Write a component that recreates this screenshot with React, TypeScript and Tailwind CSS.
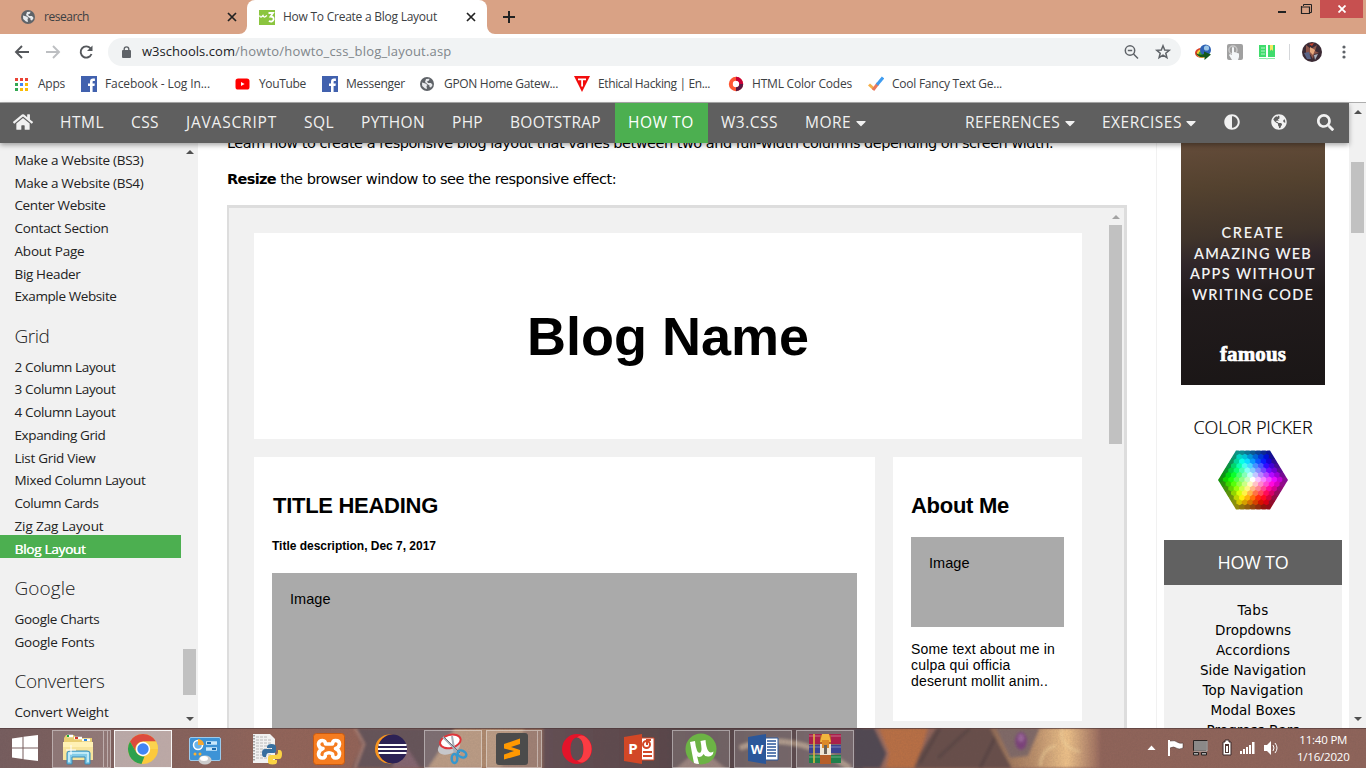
import React, { useLayoutEffect, useRef, useState } from "react";
import { FaHome, FaSearch, FaAdjust, FaGlobeAmericas, FaCaretDown } from "react-icons/fa";

/* Text run whose tracking is adjusted so that it fills a known advance width. */
function Fit({ w, className = "", children }: { w: number; className?: string; children: string }) {
  const ref = useRef<HTMLSpanElement>(null);
  const [tracking, setTracking] = useState(0);
  useLayoutEffect(() => {
    if (ref.current) {
      const natural = ref.current.getBoundingClientRect().width - tracking * children.length;
      setTracking((w - natural) / children.length);
    }
  }, [w, children]);
  return (
    <span ref={ref} className={`inline-block shrink-0 whitespace-pre ${className}`} style={{ letterSpacing: tracking }}>
      {children}
    </span>
  );
}

const GlobeIcon = () => (
  <svg width="14" height="14" viewBox="0 0 14 14">
    <circle cx="7" cy="7" r="7" fill="#5f6368" />
    <path d="M2 5.5 L5.5 6.5 L7.5 8 L6.5 9 L7 12 L5 11.5 L2.2 9 Z M6 2 L9.5 1.8 L9 3.5 L7 4.5 L8 6 L11 6 L12.6 8 L11 10.5 L9.5 10 L9.5 8.5 L7.2 7 L5 5 Z" fill="#e8eaed" />
  </svg>
);
const FbIcon = () => (
  <svg width="16" height="16" viewBox="0 0 16 16">
    <rect width="16" height="16" fill="#4161ae" />
    <path d="M9 16V10H7V7.6H9V5.7C9 3.6 10.1 2.6 12 2.6H13.9V5H12.6C11.8 5 11.6 5.4 11.6 6V7.6H13.8L13.5 10H11.6V16Z" fill="#fff" />
  </svg>
);
const AppsIcon = () => (
  <svg width="14" height="14" viewBox="0 0 14 14">
    {["#ea4335", "#ea4335", "#ea4335", "#34a853", "#4285f4", "#fbbc04", "#34a853", "#fbbc04", "#fbbc04"].map((c, i) => (
      <rect key={i} x={1 + (i % 3) * 5} y={1 + Math.floor(i / 3) * 5} width="3" height="3" fill={c} />
    ))}
  </svg>
);
const YtIcon = () => (
  <svg width="16" height="16" viewBox="0 0 16 16">
    <rect x="0.5" y="2.4" width="14" height="11.2" rx="2.6" fill="#f00" />
    <path d="M6 5.9V10.1L9.6 8Z" fill="#fff" />
  </svg>
);
const EthicalIcon = () => (
  <svg width="16" height="16" viewBox="0 0 16 16">
    <path d="M0 0H16L8 16Z" fill="#f20d0d" />
    <path d="M4 2.5H12V4.3H9V10.5H7.2V4.3H4Z" fill="#fff" />
  </svg>
);
const ColorCodesIcon = () => (
  <svg width="16" height="16" viewBox="0 0 16 16" fill="none" strokeWidth="4">
    <circle cx="8" cy="8" r="5.2" stroke="#ff5733" />
    <path d="M8 2.8A5.2 5.2 0 0 1 13.2 8" stroke="#c70039" />
    <path d="M13.2 8A5.2 5.2 0 0 1 8 13.200" stroke="#581845" />
  </svg>
);
const CheckIcon = () => (
  <svg width="16" height="16" viewBox="0 0 16 16" fill="none" strokeWidth="3">
    <path d="M1 8.500L6 13" stroke="#f5b04a" />
    <path d="M5 14L10 7.5" stroke="#e8785c" />
    <path d="M9 8.8L15 1.5" stroke="#3f9cf0" />
  </svg>
);

const bookmarks = [
  { label: "Apps", w: 27, cell: "w-[67px]", icon: <AppsIcon /> },
  { label: "Facebook - Log In...", w: 105, cell: "w-[154px]", icon: <FbIcon /> },
  { label: "YouTube", w: 47, cell: "w-[87px]", icon: <YtIcon /> },
  { label: "Messenger", w: 59, cell: "w-[98px]", icon: <FbIcon /> },
  { label: "GPON Home Gatew...", w: 114, cell: "w-[154px]", icon: <GlobeIcon /> },
  { label: "Ethical Hacking | En...", w: 112, cell: "w-[154px]", icon: <EthicalIcon /> },
  { label: "HTML Color Codes", w: 100, cell: "w-[140px]", icon: <ColorCodesIcon /> },
  { label: "Cool Fancy Text Ge...", w: 110, cell: "w-[154px]", icon: <CheckIcon /> },
];

function Close({ className }: { className: string }) {
  return (
    <svg className={`shrink-0 ${className}`} width="10" height="10" viewBox="0 0 10 10" stroke="#222" strokeWidth="1.7">
      <path d="M1 1L9 9M9 1L1 9" />
    </svg>
  );
}

function TabStrip() {
  return (
    <div className="flex h-[34px] shrink-0 bg-[#d9a285] font-['Open_Sans',sans-serif] text-[12px] text-[#3c4043]">
      <div className="flex h-full w-[247px] items-center pl-[21px]">
        <GlobeIcon />
        <Fit w={45} className="ml-[9px]">research</Fit>
        <Close className="ml-[138px]" />
      </div>
      <div className="relative flex h-full w-[240px] items-center rounded-t-lg bg-white pl-3">
        <svg className="absolute bottom-0 -left-2" width="8" height="8"><path d="M8 0V8H0A8 8 0 0 0 8 0Z" fill="#fff" /></svg>
        <svg className="absolute -right-2 bottom-0" width="8" height="8"><path d="M0 0V8H8A8 8 0 0 1 0 0Z" fill="#fff" /></svg>
        <svg className="shrink-0" width="16" height="15" viewBox="0 0 16 15" fill="none" stroke="#fff">
          <rect width="16" height="15" fill="#8bc53f" stroke="none" />
          <path d="M.5 5.5Q1.5 8 3 6.5L4 5.5Q5 8 6.5 6.5L8 5.5" strokeWidth="1.3" />
          <path d="M9.5 3H14L11.5 6.5Q15 6.5 14.6 9.5Q13.8 12.5 9.8 11" strokeWidth="1.8" />
        </svg>
        <Fit w={154} className="ml-2">How To Create a Blog Layout</Fit>
        <Close className="ml-[29px]" />
      </div>
      <svg className="mt-[11px] ml-4" width="12" height="12" stroke="#222" strokeWidth="2"><path d="M6 0V12M0 6H12" /></svg>
      <div className="ml-auto flex h-[18px] pr-[3px]">
        <svg width="42" height="18" fill="none" stroke="#222">
          <path d="M0 12H8" strokeWidth="2" />
          <path d="M25.500 6V4.500H33.500V12.500H32" strokeWidth="1" />
          <path d="M23.500 6V13.500H31.500V6.500M23 7H32" strokeWidth="1.200" />
        </svg>
        <div className="flex w-[43px] items-center justify-center bg-[#c75050]">
          <svg width="8" height="8" stroke="#fff" strokeWidth="1.8"><path d="M.5 .5L7.5 7.5M7.5 .5L.5 7.5" /></svg>
        </div>
      </div>
    </div>
  );
}

function Toolbar() {
  return (
    <div className="flex h-[36px] shrink-0 items-center bg-white font-['Open_Sans',sans-serif] text-[13px]">
      <svg className="ml-[14px] shrink-0" width="82" height="16" viewBox="0 0 82 16" fill="none" strokeWidth="1.9">
        <path d="M15 8H2.5M8 2L2 8L8 14" stroke="#55585c" />
        <path d="M32 8H44.500M39 2L45 8L39 14" stroke="#bdbfc2" />
        <path d="M76.500 4.300A5.600 5.600 0 1 0 77.500 10" stroke="#55585c" />
        <path d="M78.500 1.500V7H73Z" fill="#55585c" stroke="none" />
      </svg>
      <div className="ml-3 flex h-7 w-[1073px] items-center rounded-full bg-[#f1f3f4] pl-[14px]">
        <svg width="9" height="12" viewBox="0 0 9 12" fill="none" className="shrink-0">
          <rect y="4" width="9" height="8" rx="1" fill="#5f6368" />
          <path d="M2.200 5V3.200A2.300 2.300 0 0 1 6.800 3.200V5" stroke="#5f6368" strokeWidth="1.400" />
        </svg>
        <Fit w={93} className="ml-[11px] text-[#202124]">w3schools.com</Fit>
        <Fit w={216.500} className="text-[#80868b]">/howto/howto_css_blog_layout.asp</Fit>
        <svg className="ml-[672px] shrink-0" width="48" height="16" viewBox="0 0 48 16" fill="none" stroke="#5f6368" strokeWidth="1.500">
          <circle cx="6" cy="6.500" r="4.700" /><path d="M9.500 10L14 14.500M3.800 6.500H8.200" />
          <path d="M39 1.800L40.700 6L45.200 6.300L41.800 9.200L42.900 13.600L39 11.200L35.100 13.600L36.200 9.200L32.800 6.300L37.300 6Z" />
        </svg>
      </div>
      <svg className="ml-[14px] shrink-0" width="82" height="18" viewBox="0 0 82 18">
        <ellipse cx="6.500" cy="10" rx="6.500" ry="5" fill="#d93a25" /><ellipse cx="7" cy="10.500" rx="5.200" ry="4.200" fill="#f3cf36" /><ellipse cx="7.500" cy="11" rx="4" ry="3" fill="#3ea23c" />
        <circle cx="10.500" cy="7" r="5.500" fill="#2e62b5" /><circle cx="11.500" cy="5" r="2.600" fill="#9bc6e6" />
        <path d="M1 10Q5 13 9 11V8.500L16 11.500L9.500 17V14Q3 15 1 10Z" fill="#14581c" />
        <rect x="32" y="1" width="16" height="16" rx="2" fill="#a0a0a0" />
        <circle cx="38" cy="7" r="4" fill="none" stroke="#c9c9c9" strokeWidth="1.500" />
        <path d="M37 4.500Q38.500 3.500 39 5V9L44 10.500V14L43 17H37L34 12L35 11L37 12Z" fill="#f3f6f8" />
        <path d="M64 2H71V14H64ZM73 2H80V14H73Z" fill="#3fdc6c" />
        <path d="M66 5H70M66 8H70M66 11H70" stroke="#b7f5c7" /><path d="M75 2H78V8L76.500 6.500L75 8Z" fill="#f5e663" />
        <path d="M64 15.500H71L72 16L73 15.500H80" stroke="#8ceba5" fill="none" />
      </svg>
      <div className="ml-3 h-4 w-px bg-[#d5d7da]" />
      <svg className="ml-3 shrink-0" width="20" height="20" viewBox="0 0 20 20">
        <circle cx="10" cy="10" r="10" fill="#3b2a34" />
        <path d="M4 3L9 7L15 3L13 9L17 11L12 12L11 17L8 12L4 15Z" fill="#8c5549" />
        <path d="M8 5L13 8L11 13L8 10Z" fill="#e6a77c" /><path d="M2 11L7 10L9 17L5 17Z" fill="#596386" /><path d="M12 13L16 12L13 18Z" fill="#aab0bd" />
        <path d="M7 2L12 1L10 4Z" fill="#c6422d" />
      </svg>
      <svg className="ml-[20px] shrink-0" width="4" height="14" fill="#5f6368"><circle cx="2" cy="2" r="1.600" /><circle cx="2" cy="7" r="1.600" /><circle cx="2" cy="12" r="1.600" /></svg>
    </div>
  );
}

const navLeft: [string, number][] = [
  ["HTML", 44], ["CSS", 28], ["JAVASCRIPT", 91], ["SQL", 30], ["PYTHON", 64], ["PHP", 31], ["BOOTSTRAP", 91], ["HOW TO", 66], ["W3.CSS", 57],
];

function SiteNav() {
  return (
    <div className="relative z-10 flex h-10 w-[1349px] shrink-0 items-center bg-[#5f5f5f] font-['Open_Sans',sans-serif] text-[15.500px] text-[#f1f1f1] shadow-[0_2px_5px_rgba(0,0,0,0.35)]">
      <div className="flex w-[47px] shrink-0 pb-0.5 pl-[13px]"><FaHome size={20} /></div>
      {navLeft.map(([label, w]) => (
        <div key={label} className={`flex h-full shrink-0 items-center pr-[14px] pb-px pl-[13px] ${label === "HOW TO" ? "bg-[#4caf50] text-white" : ""}`}>
          <Fit w={w}>{label}</Fit>
        </div>
      ))}
      <div className="flex items-center pb-px pl-[13px]"><Fit w={46}>MORE</Fit><FaCaretDown className="ml-[2px]" size={16} /></div>
      <div className="ml-auto flex items-center pr-[15px] pb-px">
        <Fit w={95}>REFERENCES</Fit><FaCaretDown className="ml-[2px]" size={16} />
        <Fit w={80} className="ml-[24px]">EXERCISES</Fit><FaCaretDown className="ml-[1px]" size={16} />
        <FaAdjust className="mb-0.5 ml-[25px]" size={16} />
        <FaGlobeAmericas className="mb-0.5 ml-[31px]" size={16} />
        <FaSearch className="ml-[30px]" size={17} />
      </div>
    </div>
  );
}

function Arrow({ up = false, color = "#505050" }: { up?: boolean; color?: string }) {
  return (
    <svg className="mx-auto block shrink-0" width="8" height="4" fill={color}>{up ? <path d="M0 4L4 0L8 4Z" /> : <path d="M0 0L4 4L8 0Z" />}</svg>
  );
}

const sideGroups: { title?: string; tw?: number; items: [string, number][] }[] = [
  { items: [["Make a Website (BS3)", 129], ["Make a Website (BS4)", 129], ["Center Website", 91], ["Contact Section", 94], ["About Page", 70], ["Big Header", 66], ["Example Website", 102]] },
  { title: "Grid", tw: 35, items: [["2 Column Layout", 101], ["3 Column Layout", 101], ["4 Column Layout", 101], ["Expanding Grid", 91], ["List Grid View", 81], ["Mixed Column Layout", 131], ["Column Cards", 84], ["Zig Zag Layout", 89], ["Blog Layout", 71]] },
  { title: "Google", tw: 61, items: [["Google Charts", 85], ["Google Fonts", 80]] },
  { title: "Converters", tw: 90, items: [["Convert Weight", 94]] },
];

function SideMenu() {
  return (
    <div className="flex w-[198px] shrink-0 bg-[#f1f1f1] font-['Open_Sans',sans-serif] text-[#222]">
      <div className="w-[181px] overflow-hidden pt-[3px] text-[13.500px]">
        {sideGroups.map((g, i) => (
          <div key={i}>
            {g.title && <div className="mt-[14px] flex h-[33.600px] items-center pl-[14.500px] text-[19px] font-light"><Fit w={g.tw!}>{g.title}</Fit></div>}
            {g.items.map(([t, w]) => (
              <div key={t} className={`flex h-[22.750px] items-center pt-[5px] pl-[14.500px] ${t === "Blog Layout" ? "bg-[#4caf50] text-white [text-shadow:0.4px_0_0_#fff]" : ""}`}>
                <Fit w={w}>{t}</Fit>
              </div>
            ))}
          </div>
        ))}
      </div>
      <div className="flex w-[17px] flex-col pt-[7px] pb-[7px]">
        <Arrow up />
        <div className="mx-auto mt-[495px] h-[46px] w-[13px] bg-[#c1c1c1]" />
        <div className="mt-auto"><Arrow /></div>
      </div>
    </div>
  );
}

function BlogFrame() {
  return (
    <div className="flex h-[523px] w-[900px] shrink-0 overflow-hidden border-[3px] border-b-0 border-l-2 border-[#ddd] bg-[#f1f1f1] font-['Liberation_Sans',sans-serif] text-[15px]">
      <div className="w-[853px] shrink-0 pt-[25px] pl-[25px]">
        <div className="flex h-[206px] items-center justify-center bg-white text-[54px] font-bold">
          <Fit w={282}>Blog Name</Fit>
        </div>
        <div className="mt-[18px] flex items-start gap-[18px]">
          <div className="h-[300px] w-[621px] bg-white px-[18px] pt-[36px]">
            <div className="h-[26px] pl-px text-[22px] leading-[26px] font-bold"><Fit w={165}>TITLE HEADING</Fit></div>
            <div className="mt-[19px] h-[16px] text-[12px] leading-[16px] font-bold"><Fit w={164}>Title description, Dec 7, 2017</Fit></div>
            <div className="mt-[19px] h-[200px] bg-[#aaa] pt-[17px] pl-[18px] leading-[18px]"><Fit w={40.500} className="text-[14.500px]">Image</Fit></div>
          </div>
          <div className="h-[264px] w-[189px] bg-white px-[18px] pt-[36px]">
            <div className="h-[26px] text-[22px] leading-[26px] font-bold"><Fit w={98}>About Me</Fit></div>
            <div className="mt-[18px] h-[90px] bg-[#aaa] pt-[17px] pl-[18px] leading-[18px]"><Fit w={40.500} className="text-[14.500px]">Image</Fit></div>
            <div className="mt-[14px] flex flex-col items-start text-[14px] leading-4">
              <Fit w={144}>Some text about me in</Fit>
              <Fit w={99.500}>culpa qui officia</Fit>
              <Fit w={137}>deserunt mollit anim..</Fit>
            </div>
          </div>
        </div>
      </div>
      <div className="ml-auto flex w-[17px] flex-col pt-[7px]">
        <Arrow up color="#a3a3a3" />
        <div className="mx-auto mt-[6px] h-[219px] w-[13px] bg-[#c1c1c1]" />
      </div>
    </div>
  );
}

function ColorHexagon() {
  const cells: React.ReactElement[] = [];
  const dx = 5.4, dy = 4.55, r = 3.6;
  for (let row = -6; row <= 6; row++) {
    const n = 13 - Math.abs(row);
    for (let k = 0; k < n; k++) {
      const x = (k - (n - 1) / 2) * dx, y = row * dy;
      const ring = Math.max(Math.abs(row), Math.round(Math.abs(x) / dx + Math.abs(row) / 2));
      const hue = (655 - (Math.atan2(-y, x) * 180) / Math.PI) % 360;
      const light = ring < 5 ? 100 - ring * 12 : ring === 5 ? 42 : 31;
      const pts = [0, 1, 2, 3, 4, 5].map((i) => {
        const a = ((i * 60 + 30) * Math.PI) / 180;
        return `${35 + x + r * Math.cos(a)},${30 + y + r * Math.sin(a)}`;
      }).join(" ");
      cells.push(<polygon key={`${row}:${k}`} points={pts} fill={`hsl(${hue} ${ring === 6 ? 85 : 100}% ${light}%)`} />);
    }
  }
  return (
    <svg width="70" height="60" viewBox="0 0 70 60">
      <clipPath id="hex"><path d="M18 .5H52L70 30L52 59.500H18L0 30Z" /></clipPath>
      <g clipPath="url(#hex)">{cells}</g>
    </svg>
  );
}

const howTo: [string, number][] = [["Tabs", 31], ["Dropdowns", 76], ["Accordions", 74], ["Side Navigation", 106], ["Top Navigation", 101], ["Modal Boxes", 85], ["Progress Bars", 93]];
const adLines: [string, number][] = [["CREATE", 63], ["AMAZING WEB", 118], ["APPS WITHOUT", 126], ["WRITING CODE", 122]];

function RightRail() {
  return (
    <div className="ml-auto flex w-[193px] shrink-0 flex-col items-center border-l border-[#f1f1f1] font-['DejaVu_Sans',sans-serif]">
      <div className="flex h-[242px] w-36 shrink-0 flex-col items-center bg-[linear-gradient(175deg,#644c3a_0%,#54422f_18%,#40342b_38%,#30262a_48%,#211b1c_62%,#1a1616_100%)] pt-[79px] text-white">
        {adLines.map(([t, w]) => (
          <div key={t} className="h-[20.700px] font-['Lato',sans-serif] text-[14.500px] leading-[21px] font-semibold text-[#f2f2f2]"><Fit w={w}>{t}</Fit></div>
        ))}
        <div className="mt-[37px] font-['Liberation_Serif',serif] text-[21px] leading-6 font-bold [-webkit-text-stroke:0.7px_white]"><Fit w={66}>famous</Fit></div>
      </div>
      <div className="mt-[29px] h-[26px] font-['Open_Sans',sans-serif] text-[18px] leading-[26px] font-light [-webkit-text-stroke:0.2px_black]"><Fit w={119}>COLOR PICKER</Fit></div>
      <div className="mt-[10px]"><ColorHexagon /></div>
      <div className="mt-[30px] flex h-[45px] w-[178px] shrink-0 items-center justify-center bg-[#616161] font-['Open_Sans',sans-serif] text-[18px] text-white"><Fit w={71}>HOW TO</Fit></div>
      <div className="flex w-[178px] grow flex-col items-center bg-[#f1f1f1] pt-[15px] text-[13.500px] leading-5">
        {howTo.map(([t, w]) => <Fit key={t} w={w} className="h-5">{t}</Fit>)}
      </div>
    </div>
  );
}

function TaskIcon({ name }: { name: string }) {
  switch (name) {
    case "explorer":
      return (
        <svg width="32" height="32" viewBox="0 0 32 32">
          <path d="M2 5L4 2H12L14 5H30V26H2Z" fill="#e9ce72" /><path d="M5 3H11M12 5H20M20 7H28" stroke="#fff" strokeWidth="2.500" />
          <path d="M5 3H7" stroke="#19a63a" strokeWidth="2" /><path d="M13 5H16" stroke="#d33d2c" strokeWidth="2" /><path d="M22 7H25" stroke="#2584dd" strokeWidth="2" />
          <path d="M1 9H31V27H1Z" fill="#f7e49c" /><path d="M1 9H31V14H1Z" fill="#fff1b5" />
          <path d="M5 31V20Q5 18 8 18H25Q28 18 28 20V31H23V24H10V31Z" fill="#83cce9" stroke="#398db9" />
          <path d="M7 29V20H26V29" fill="none" stroke="#d4f3fc" strokeWidth="1.500" /><path d="M9 12V22M4 17H14" stroke="#fff" />
        </svg>
      );
    case "chrome":
      return (
        <svg width="32" height="32" viewBox="0 0 32 32">
          <circle cx="16" cy="16" r="15" fill="#fbc93d" />
          <path d="M3 8.500A15 15 0 0 1 29 8.500H16A7.500 7.500 0 0 0 9.500 20Z" fill="#dd4b3e" />
          <path d="M3 8.500L9.500 19.700Q13 24 17.500 23.400L14.500 31A15 15 0 0 1 3 8.500Z" fill="#2ea14e" />
          <path d="M16 8.500H29.200Q31 12 31 16H23Z" fill="#fbd34e" />
          <circle cx="16" cy="16" r="7.200" fill="#fff" /><circle cx="16" cy="16" r="5.700" fill="#4285f4" />
        </svg>
      );
    case "control":
      return (
        <svg width="32" height="32" viewBox="0 0 32 32">
          <rect x=".500" y="4.500" width="31" height="23" rx="1.500" fill="#3d93d6" stroke="#9bcbee" />
          <circle cx="9" cy="12" r="4.500" fill="#6ab4ea" stroke="#fff" strokeWidth="1.500" /><path d="M9 12V6A6 6 0 0 1 15 12Z" fill="#f5a732" />
          <path d="M17 10H28M17 16H28" stroke="#c8e8fb" strokeWidth="3.500" /><path d="M18 10H22M23 16H27" stroke="#1b69ab" strokeWidth="2" />
          <circle cx="6" cy="21" r="1.500" fill="#fbb132" /><circle cx="11" cy="21" r="1.500" fill="#fbb132" />
          <ellipse cx="16" cy="27" rx="6.500" ry="4.500" fill="#ccc" /><ellipse cx="15" cy="25.500" rx="4" ry="2.500" fill="#fff" />
        </svg>
      );
    case "python":
      return (
        <svg width="32" height="32" viewBox="0 0 32 32">
          <path d="M2 1H19L24 6V30H2Z" fill="#f1f1f1" /><path d="M5 4H17M5 7H20M5 10H20M5 13H20M5 16H20M5 19H20M5 22H20M5 25H20" stroke="#b8b8b8" strokeDasharray="3 1" />
          <path d="M3 2V29" stroke="#555" strokeDasharray="1.500 1.500" />
          <path d="M16 14Q16 11 20.500 11Q25 11 25 14V18Q25 20 22 20H18Q15 20 15 24H13Q11 24 11 20Q11 16 14 16H21V15H16Z" fill="#376f9f" />
          <path d="M27 17H28.500Q31 17 31 21Q31 26 28 26H22V27H26V29Q26 31.500 21.500 31.500Q17 31.500 17 29V25Q17 22 20 22H24Q27 22 27 19Z" fill="#fbd343" />
        </svg>
      );
    case "xampp":
      return (
        <svg width="32" height="32" viewBox="0 0 32 32" fill="none">
          <rect x=".500" y=".500" width="31" height="31" rx="3" fill="#f57c20" stroke="#c85a10" />
          <path d="M10 15.500Q5.500 15 5.500 11Q6 7.500 9.500 7.500Q12.500 7.500 12.500 11H19.500Q19.500 7.500 22.500 7.500Q26.500 7.500 26.500 11Q26 15 22.500 15.500Q26.500 17 26.500 21Q26 25 22.500 25Q19.500 25 19.500 21Q16 18.500 12.500 21Q12.500 25 9.500 25Q5.500 25 5.500 21Q6 17 10 15.500Z" stroke="#fff" strokeWidth="3.600" strokeLinejoin="round" />
        </svg>
      );
    case "eclipse":
      return (
        <svg width="32" height="32" viewBox="0 0 32 32">
          <circle cx="14.500" cy="16" r="14.500" fill="#f7941e" /><circle cx="17.500" cy="16" r="14.500" fill="#2c2255" />
          <path d="M3.500 12H31.500M3 16H32M3.500 20H31.500" stroke="#fff" strokeWidth="2" />
        </svg>
      );
    case "snip":
      return (
        <svg width="32" height="32" viewBox="0 0 32 32" fill="none">
          <ellipse cx="12" cy="14" rx="11.500" ry="7" fill="#c6c7cb" transform="rotate(-20 12 14)" />
          <ellipse cx="13.500" cy="8.500" rx="10.500" ry="6.500" fill="#fff" stroke="#de353b" strokeWidth="2" transform="rotate(-15 13 9)" />
          <path d="M6 4L23 21M15 3L18 22" stroke="#a9afb8" strokeWidth="2" /><path d="M7 4L23 20" stroke="#6b7079" />
          <ellipse cx="25" cy="21" rx="4.500" ry="3.300" stroke="#3598cf" strokeWidth="2.500" transform="rotate(25 25 21)" /><ellipse cx="17.500" cy="25.500" rx="2.800" ry="4.500" stroke="#3598cf" strokeWidth="2.500" />
        </svg>
      );
    case "sublime":
      return (
        <svg width="32" height="32" viewBox="0 0 32 32">
          <rect width="32" height="32" rx="3" fill="#4b4b4b" />
          <path d="M8 11L24 5.500V11L15 14L24 17V22L8 26.500V21.500L18 18L8 15.500Z" fill="#ff9800" />
        </svg>
      );
    case "opera":
      return (
        <svg width="32" height="32" viewBox="0 0 32 32">
          <path fillRule="evenodd" d="M16 1A15 15 0 1 0 16 31A15 15 0 1 0 16 1ZM16 4.500C20 4.500 22.500 9.500 22.500 16S20 27.500 16 27.500S9.500 22.500 9.500 16S12 4.500 16 4.500Z" fill="#e3142a" />
          <path d="M16 4.500Q19 1.500 23 3A15 15 0 0 1 23 29Q19 30.500 16 27.500C20 27.500 22.500 22.500 22.500 16S20 4.500 16 4.500Z" fill="#fa3c43" />
        </svg>
      );
    case "ppt":
    case "word": {
      const ppt = name === "ppt";
      const c = ppt ? "#d24726" : "#2b579a";
      return (
        <svg width="32" height="32" viewBox="0 0 32 32">
          <path d="M17 5H31V27H17Z" fill="#fff" stroke={c} />
          {ppt ? <g fill="none" stroke={c} strokeWidth="2"><circle cx="23.500" cy="11.500" r="3.500" /><path d="M24 12V7H28M20 19H29M20 23H29" /></g> : <path d="M20 8H29M20 11H29M20 14H29M20 17H29M20 20H29M20 23H29" stroke={c} strokeWidth="1.300" />}
          <path d="M1 4L19 1V31L1 28Z" fill={c} />
          <text x="10" y="21" textAnchor="middle" fontFamily="Open Sans, sans-serif" fontWeight="700" fontSize={ppt ? 15 : 13} fill="#fff">{ppt ? "P" : "W"}</text>
        </svg>
      );
    }
    case "utorrent":
      return (
        <svg width="32" height="32" viewBox="0 0 32 32">
          <circle cx="16" cy="16" r="15.500" fill="#6cb345" />
          <path d="M5 9L10 8Q10.500 14 12 17.500Q13 20.500 15.500 19.500Q17.500 18 15.500 8L20.500 7Q21 14 23 17.500Q25 21 28.500 18.500Q28 23 24 23.500Q20 24 18.500 21Q17 24 14 24Q12.500 24 12 23L14 31Q11 31 9 30Q7 21 5 9Z" fill="#fff" />
        </svg>
      );
    default:
      return (
        <svg width="32" height="32" viewBox="0 0 32 32">
          <path d="M0 1H32V11H0Z" fill="#a9204b" /><path d="M0 12H32V20H0Z" fill="#3c4393" /><path d="M0 22H32V30H0Z" fill="#21804c" />
          <path d="M0 3H32M0 14H32M0 24H32" stroke="#fff" strokeOpacity=".35" /><path d="M5 1V30" stroke="#e4bd3c" strokeWidth="1.500" />
          <path d="M11 2H22V31H11Z" fill="#b65f2a" /><path d="M13 1H20L22 9H11Z" fill="#f2b63e" /><path d="M11 11H22V22H11Z" fill="#eee5d6" />
          <path d="M13 7H20V15H13Z" fill="#dc8a29" /><path d="M15 12H18V21H15Z" fill="#6b6259" />
        </svg>
      );
  }
}

const tasks: [string, string][] = [
  ["explorer", "open"], ["chrome", "active"], ["control", ""], ["python", ""], ["xampp", ""], ["eclipse", ""], ["snip", "open"],
  ["sublime", "open"], ["opera", ""], ["ppt", ""], ["utorrent", "open"], ["word", "open"], ["winrar", "open"],
];

function TaskbarBackdrop() {
  return (
    <svg className="absolute inset-0" width="1366" height="40" preserveAspectRatio="none">
      <defs>
        <linearGradient id="wall"><stop offset="0" stopColor="#775e5f" /><stop offset=".08" stopColor="#80625f" /><stop offset=".2" stopColor="#92655a" /><stop offset=".26" stopColor="#936458" /><stop offset="1" stopColor="#8f655b" /></linearGradient>
        <linearGradient id="gold"><stop offset="0" stopColor="#8f6a55" /><stop offset=".4" stopColor="#ba8f6b" /><stop offset=".7" stopColor="#efc38a" /><stop offset="1" stopColor="#986a5e" /></linearGradient>
        <linearGradient id="dusk"><stop offset="0" stopColor="#655054" /><stop offset=".5" stopColor="#564448" /><stop offset="1" stopColor="#625155" /></linearGradient>
        <filter id="soft"><feGaussianBlur stdDeviation="1.500" /></filter>
        <filter id="grain"><feTurbulence type="fractalNoise" baseFrequency=".6" numOctaves="2" seed="4" /><feColorMatrix values="0 0 0 0 0.1 0 0 0 0 0.06 0 0 0 0 0.06 0.5 0 0 0 -0.1" /></filter>
      </defs>
      <rect width="1366" height="40" fill="url(#wall)" />
      <g filter="url(#soft)">
        <path d="M355 0H560V40H352L362 18Z" fill="#66545a" /><path d="M355 40L364 16L355 0" stroke="#b3877a" strokeWidth="2" fill="none" />
        <path d="M392 40L402 12L420 40Z" fill="#846671" />
        <path d="M428 40L455 0H540L500 40Z" fill="#af8b70" /><path d="M500 40L525 0H545V40Z" fill="#8e6b5b" />
        <rect x="543" y="-4" width="320" height="48" fill="url(#dusk)" />
        <path d="M672 44L700 20L730 44Z" fill="#8a7069" /><path d="M740 20Q790 0 850 40" stroke="#a58d7b" strokeWidth="5" fill="none" />
        <path d="M854 0H875L887 25L880 40H854Z" fill="#514852" /><path d="M876 0L888 25L884 40" stroke="#9a6d60" strokeWidth="3" fill="none" />
        <path d="M879 0H928L916 40H886L889 25Z" fill="#b97045" />
        <path d="M936 0H1030V40H914L920 25Z" fill="#68504b" /><path d="M940 0L920 35M970 0L938 30M1000 0L980 40" stroke="#513e40" strokeWidth="3" strokeOpacity=".7" />
        <path d="M990 0H1100V40H1012Z" fill="url(#gold)" /><path d="M996 0H1040L1028 28L1010 30Z" fill="#806a68" />
        <ellipse cx="1021" cy="13" rx="6" ry="9" fill="#7b427c" /><ellipse cx="1021" cy="10" rx="3" ry="4" fill="#9b679c" /><path d="M1040 38Q1042 20 1056 18M1062 0Q1058 18 1080 24" stroke="#f5d7a0" strokeWidth="2" strokeOpacity=".7" fill="none" />
      </g>
      <rect width="1366" height="40" filter="url(#grain)" opacity=".35" />
      <path d="M0 .5H1366" stroke="#4b3537" strokeOpacity=".6" />
    </svg>
  );
}

function Taskbar() {
  return (
    <div className="relative h-10 shrink-0 overflow-hidden bg-[#8f6055]">
      <TaskbarBackdrop />
      <div className="relative flex h-full items-center">
        <svg className="ml-3 w-[38px] shrink-0" width="38" height="26" viewBox="0 0 38 26" fill="#fff">
          <path d="M0 3.500L10.500 2V12.500H0ZM11.500 1.800L26 0V12.500H11.500ZM0 13.500H10.500V24L0 22.500ZM11.500 13.500H26V26L11.500 24.200Z" />
        </svg>
        {tasks.map(([name, state]) => {
          const grouped = name === "explorer" || name === "sublime";
          return (
            <div key={name} className="flex h-full w-[62px] shrink-0 items-center pt-px pl-[2px]">
              <div className={`flex h-[38px] items-center justify-center ${grouped ? "w-[52px]" : "w-[58px]"} ${state === "active" ? "border border-white/90 bg-white/45" : state === "open" ? "border border-white/40 bg-white/15" : ""}`}>
                <TaskIcon name={name} />
              </div>
              {grouped && <div className="h-[38px] w-1 border-y border-r border-white/40 bg-white/15" />}
              {name === "explorer" && <div className="h-[38px] w-[3px] border-y border-r border-white/40 bg-white/15" />}
            </div>
          );
        })}
        <svg className="ml-[290px] shrink-0" width="136" height="24" viewBox="0 0 136 24" fill="#fff">
          <path d="M1.500 14L5.500 9.500L9.500 14Z" />
          <path d="M24 5Q29 4 31 6Q34 8 37 7V12Q33 14 30 12Q28 10 24 12" stroke="#3c2c2a" strokeWidth=".5" /><path d="M22 4H24V20H22Z" />
          <path d="M47.500 4.500H61V14.500H47.500Z" fill="#8b8988" stroke="#2b2423" /><path d="M61 5V15H48" stroke="#c9c9c9" fill="none" /><path d="M47.500 16.500H52.500V19H47.500ZM55.500 16.500H60.500V19H55.500Z" fill="#aaa" stroke="#252222" />
          <path d="M79 4H83V6H85V19H77V6H79Z" stroke="#3b2928" /><path d="M79 8H83V17H79Z" fill="#4e3633" /><path d="M80 10H82V16H80Z" />
          <path d="M94 15H96V18H94ZM97 13H99V18H97ZM100 11H102V18H100ZM103 9H105V18H103ZM106 6H108.500V18H106Z" />
          <path d="M118 9H121L125 5V19L121 15H118Z" /><path d="M127 9Q129 12 127 15M129 7Q133 12 129 17" fill="none" stroke="#fff" />
        </svg>
        <div className="ml-[15px] flex flex-col items-center font-['Open_Sans',sans-serif] text-[11.500px] leading-[17px] text-white">
          <Fit w={48}>11:40 PM</Fit><Fit w={52.500}>1/16/2020</Fit>
        </div>
      </div>
    </div>
  );
}

export default function App() {
  return (
    <div className="flex h-[768px] w-[1366px] flex-col overflow-hidden bg-white text-black">
      <TabStrip />
      <Toolbar />
      <div className="flex h-8 shrink-0 items-center border-b border-transparent pb-1 pl-[14px] font-['Open_Sans',sans-serif] text-[12px] text-[#3c4043]">
        {bookmarks.map((b) => (
          <div key={b.label} className={`flex shrink-0 items-center ${b.cell}`}>
            <div className="flex w-6 shrink-0">{b.icon}</div>
            <Fit w={b.w}>{b.label}</Fit>
          </div>
        ))}
      </div>
      <div className="h-px shrink-0 bg-[#adadad]" />
      <div className="flex h-[625px] shrink-0">
        <div className="flex w-[1349px] flex-col">
          <SiteNav />
          <div className="flex h-[585px] overflow-hidden">
            <SideMenu />
            <div className="ml-[29px] w-[900px] shrink-0 font-['DejaVu_Sans',sans-serif] text-[14.500px]">
              <div className="-mt-[11px] h-[22px] leading-[22px]"><Fit w={826}>Learn how to create a responsive blog layout that varies between two and full-width columns depending on screen width.</Fit></div>
              <div className="mt-[14px] mb-[15px] h-[22px] leading-[22px]"><Fit w={49} className="font-bold">Resize</Fit><Fit w={340}> the browser window to see the responsive effect:</Fit></div>
              <BlogFrame />
            </div>
            <RightRail />
          </div>
        </div>
        <div className="flex w-[17px] flex-col bg-[#f1f1f1] pt-[7px] pb-[7px]">
          <Arrow up />
          <div className="mx-auto mt-[48px] h-[71px] w-[13px] bg-[#c1c1c1]" />
          <div className="mt-auto"><Arrow /></div>
        </div>
      </div>
      <Taskbar />
    </div>
  );
}
